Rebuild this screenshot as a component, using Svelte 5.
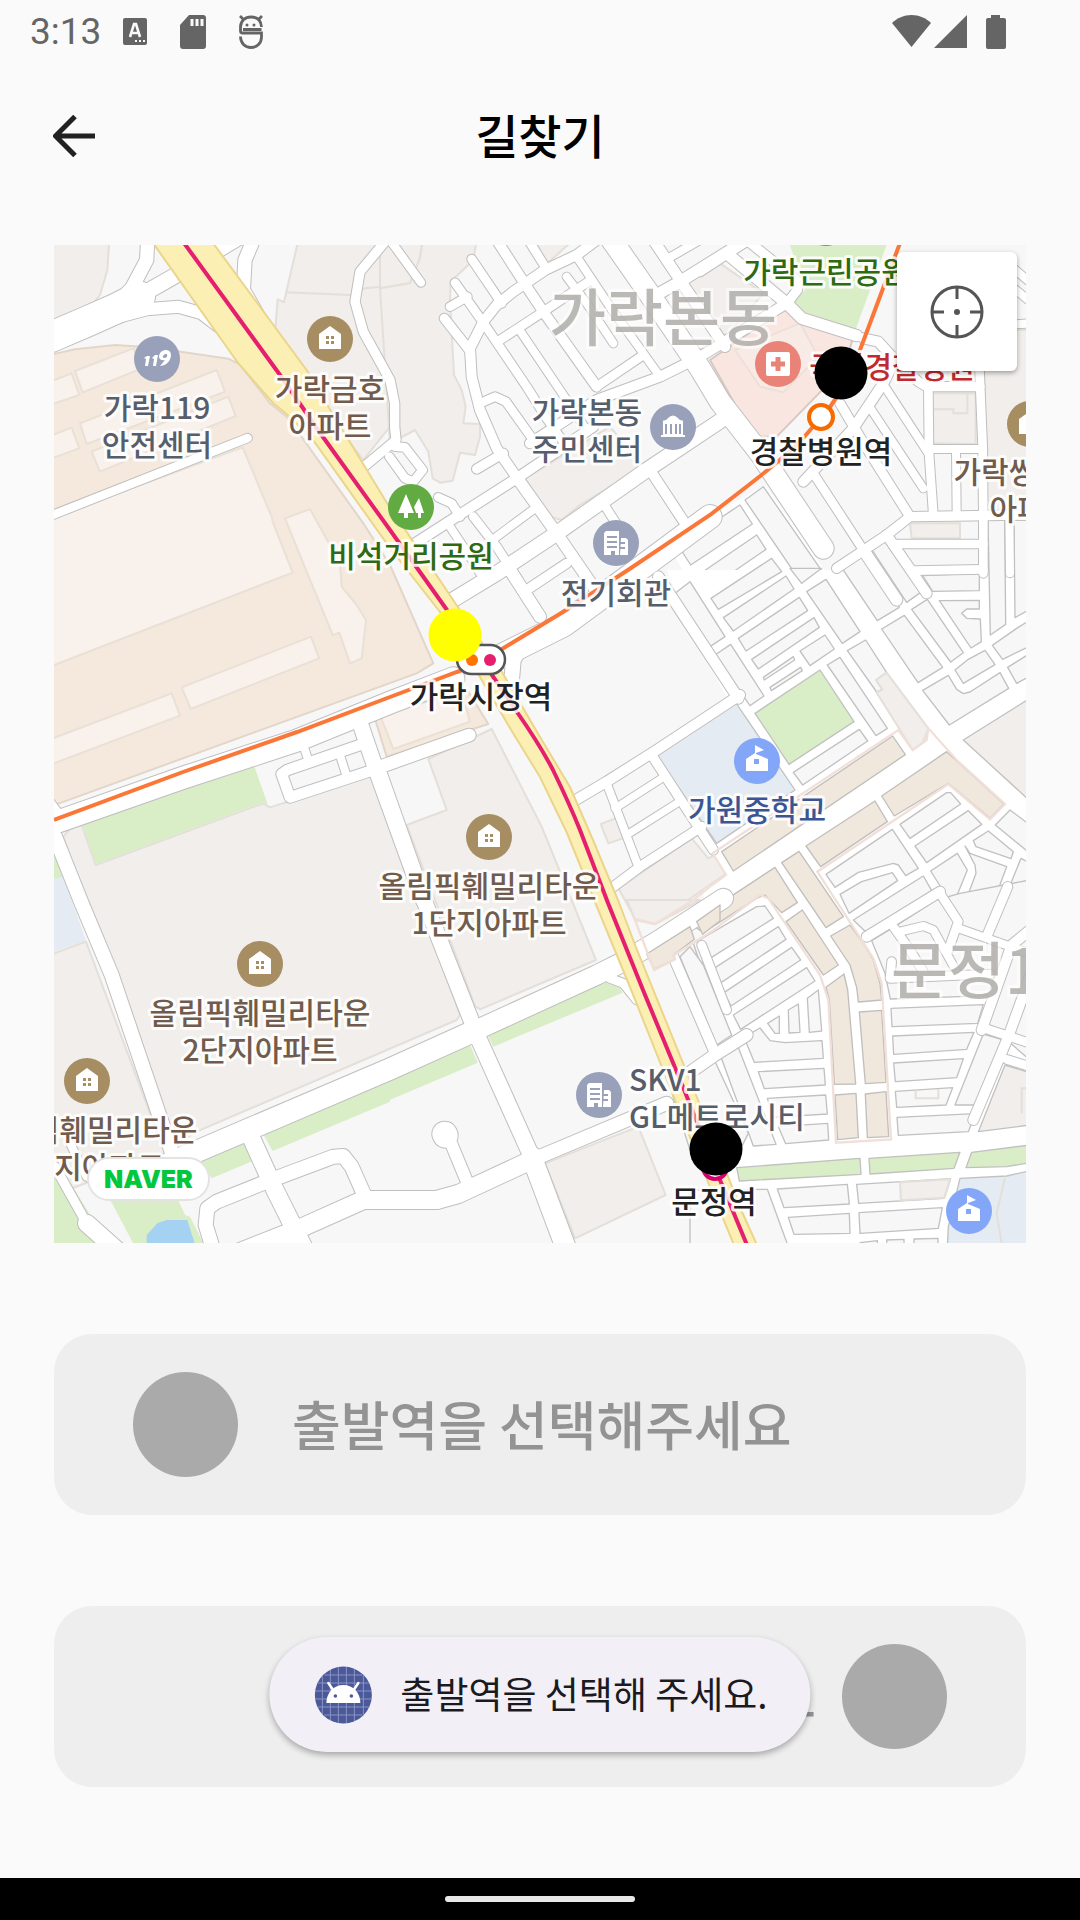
<script>
	// the map is cut in tiles, each drawn on a grid of three units per pixel
	const tiles = [
		{
			x: 50,
			y: 240,
			areas: [
				['lot', '0,0 178,0 172,90 150,165 118,205 0,248'],
				['lot', '745,0 1020,0 1020,560 940,660 800,480 675,280 683,178 702,186'],
				['market', '0,345 75,328 195,315 300,322 535,356 570,374 660,490 715,535 940,850 1020,975 1150,1270 1100,1300 0,1700'],
				['block', '0,425 65,400 88,465 0,495'],
				['block', '75,393 250,325 275,385 98,457'],
				['block', '90,550 500,390 525,455 110,612'],
				['block', '125,635 535,470 557,528 150,695'],
				['block', '0,588 65,563 88,625 0,657'],
				['block', '0,835 578,622 665,830 668,845 728,998 0,1280']
			],
			lines: ['706,157 900,165 945,145 1020,138'],
			roads: [
				[90, '0,292 110,245 200,205 270,170'],
				[46, '230,190 370,110 570,-10'],
				[40, '293,0 290,60 245,145 200,190'],
				[36, '150,245 290,208 385,200 455,220 520,270'],
				[40, '610,0 585,60 580,150 620,220'],
				[28, '1005,5 930,95 915,185 940,275 1020,420 1034,490 1034,560 1038,600 930,690'],
				[25, '0,828 593,594']
			]
		},
		{
			x: 380,
			y: 240,
			areas: [
				['lot', '0,0 128,0 118,60 90,130 0,145'],
				['lot', '0,145 90,130 118,60 130,0 290,0 280,60 212,125 210,180 222,405 245,450 257,500 250,550 300,552 300,590 285,645 240,638 218,722 180,728 158,715 145,635 105,570 30,610'],
				['lot', '435,715 690,560 790,680 600,795 545,840 510,830'],
				['lot', '465,0 580,0 500,72'],
				['lot', '915,130 1020,70 1150,160 1020,310']
			],
			roads: [
				[25, '30,0 123,128'],
				[26, '275,57 365,190'],
				[30, '350,0 440,140 490,215 650,440'],
				[26, '445,0 495,80'],
				[30, '650,0 590,45 495,90 400,155 350,195 310,245 270,325 275,410 300,510 350,625 410,712'],
				[26, '225,128 310,248 440,440 500,535 560,620'],
				[26, '210,200 262,170'],
				[28, '193,235 268,330'],
				[26, '360,300 490,215 630,122'],
				[24, '590,50 700,215 790,340 840,410'],
				[24, '415,265 560,480 620,570'],
				[24, '560,110 620,190 700,310'],
				[62, '695,0 800,150 960,385 1020,485 1140,640 1330,925'],
				[32, '820,0 920,150 1035,320'],
				[24, '870,52 960,0'],
				[34, '820,170 900,125 1100,0'],
				[26, '650,440 790,345'],
				[30, '450,610 650,480 840,410 960,350 1220,190'],
				[26, '305,488 345,470 378,485 460,600'],
				[28, '290,687 370,640'],
				[30, '90,920 230,830 410,715 640,560'],
				[34, '410,712 530,880 640,1040'],
				[44, '210,1085 350,1000 530,880 800,690 1040,530'],
				[30, '810,690 915,850'],
				[26, '670,790 740,900'],
				[26, '175,772 215,790 240,830'],
				[26, '280,830 350,920 415,1020'],
				[24, '210,860 270,950 300,1000'],
				[24, '330,905 465,805'],
				[26, '45,620 75,622 128,690 100,725 75,715 28,650']
			]
		},
		{
			x: 710,
			y: 240,
			areas: [
				['hospital', '0,360 225,205 270,240 428,298 400,385 200,590 130,590'],
				['ward', '75,330 270,250 325,350 220,457 150,440'],
				['park', '235,0 535,0 437,268 270,225 250,185 285,150'],
				['lot', '820,270 960,270 960,820 830,820'],
				['lot', '665,460 797,460 797,612 668,610'],
				['lot', '600,850 750,850 750,895 605,895'],
				['blank', '-130,905 165,735 350,1000 0,1150 -60,1030'],
				['cell', '-95,917 90,795 127,852 -58,975'],
				['cell', '-40,1008 140,885 168,928 -10,1050'],
				['cell', '105,780 160,740 335,992 275,1030']
			],
			lines: ['668,508 730,508 730,520 772,520 772,460'],
			roads: [
				[34, '50,40 230,190 275,235 440,287'],
				[28, '110,0 265,125 262,150 235,185'],
				[28, '-30,95 130,-10'],
				[30, '460,295 505,305 555,360 520,430 430,565 280,725'],
				[28, '555,360 625,425 650,440 810,440'],
				[28, '390,490 470,625 600,830'],
				[26, '310,700 460,930'],
				[24, '478,500 640,745'],
				[24, '518,430 655,640'],
				[26, '655,440 657,640 670,825'],
				[26, '808,380 818,620 820,840 820,1000'],
				[24, '660,627 820,627'],
				[24, '738,630 740,820'],
				[28, '380,985 530,885 600,830 740,828 960,825'],
				[26, '560,912 820,912'],
				[26, '610,992 820,988'],
				[24, '898,830 900,1000'],
				[34, '460,930 560,1080'],
				[30, '530,885 650,1060'],
				[24, '820,260 960,250'],
				[24, '880,60 1000,160'],
				[24, '880,120 980,200']
			]
		},
		{
			x: 50,
			y: 570,
			areas: [
				['block', '-10,512 365,370 390,437 -10,588'],
				['block', '395,352 783,200 807,265 422,417'],
				['block', '705,-155 780,-183 870,-20 875,50 920,105 948,150 935,265 900,280 868,188 848,195 770,5'],
				['park', '0,820 40,920 0,935'],
				['school', '0,930 40,920 108,1112 0,1150'],
				['lot', '0,1155 108,1115 345,1750 0,1880'],
				['lot', '40,800 60,775 95,765 137,885 640,700 660,712 970,612 1230,1335 1220,1350 440,1685 360,1735'],
				['park', '97,762 605,567 653,703 640,697 137,883']
			],
			roads: [
				[66, '0,763 400,623 740,512 1020,398 1210,325'],
				[30, '0,700 30,740'],
				[42, '15,800 95,1000 185,1215 365,1745'],
				[46, '920,430 975,590 1120,990'],
				[32, '985,595 720,682 695,612 712,600 930,525'],
				[24, '748,490 778,580'],
				[24, '868,550 892,625']
			]
		},
		{
			x: 380,
			y: 570,
			areas: [
				['market', '-20,430 265,365 325,462 20,560'],
				['block', '0,435 245,365 270,455 40,537'],
				['lot', '80,765 200,720 145,567 335,477 485,770 648,1170 300,1318 285,1308'],
				['lot', '662,762 720,740 745,800 685,820'],
				['lot', '715,955 935,805 985,865 1030,840 1040,910 820,1062 765,1045']
			],
			roads: [
				[38, '-20,598 268,495'],
				[46, '-10,590 130,985 285,1380'],
				[70, '330,275 550,165 700,55 990,-160'],
				[44, '395,330 400,270 430,215'],
				[36, '390,0 480,140'],
				[28, '440,60 560,-20'],
				[30, '570,700 680,635 830,540 1080,375'],
				[24, '680,640 775,890'],
				[22, '705,715 845,625'],
				[22, '740,795 890,700'],
				[28, '815,555 1000,840'],
				[28, '680,965 780,890 965,770'],
				[32, '835,20 1075,385']
			]
		},
		{
			x: 710,
			y: 570,
			areas: [
				['blank', '-130,0 960,0 960,2030 0,2030 -20,960 48,915 8,850 20,820 100,600 60,400 -60,180'],
				['cell', '-105,70 -60,35 45,200 0,230'],
				['cell', '3,85 185,-35 215,5 25,118'],
				['cell', '40,143 228,18 252,57 70,183'],
				['cell', '85,205 268,82 293,122 108,243'],
				['cell', '125,268 312,143 328,172 145,297'],
				['cell', '160,322 250,260 254,270 163,330'],
				['cell', '180,352 272,292 277,302 184,362'],
				['cell', '270,243 345,195 373,237 300,287'],
				['cell', '290,65 348,28 450,185 397,220'],
				['cell', '240,-5 335,-5 275,40'],
				['cell', '15,255 62,223 162,378 120,407'],
				['park edged', '135,430 330,300 432,455 237,583'],
				['cell', '250,607 448,478 473,513 278,645'],
				['cell', '352,285 390,262 532,475 498,497'],
				['cell', '412,242 467,210 530,308 498,330 517,358 500,366'],
				['lot', '530,308 655,475 640,515 608,540 500,368 517,358 498,330'],
				['school edged', '-165,550 70,387 255,660 20,820'],
				['cell', '395,-7 468,-52 568,112 502,152'],
				['cell', '483,-65 527,-95 635,65 590,97'],
				['cell', '515,177 583,136 698,292 624,338'],
				['cell', '605,118 652,88 760,248 722,276'],
				['cell', '638,17 808,10 808,62 668,64'],
				['cell', '688,92 808,91 808,117 770,117 755,130 770,145 811,147 814,215 783,234'],
				['cell', '735,300 775,268 825,241 855,284 760,340'],
				['cell', '638,361 715,316 740,358 760,371 780,366 870,308 896,355 718,465'],
				['cell', '834,-150 884,-150 887,163 841,195'],
				['cell', '912,-150 960,-150 960,118 915,143'],
				['cell', '847,226 920,175 960,150 960,228 878,268'],
				['cell', '893,292 960,250 960,318 920,340'],
				['lot edged', '760,510 960,385 960,693'],
				['shops', '35,845 548,498 586,554 70,903'],
				['shops', '515,678 710,545 882,702 840,745 715,640 553,738'],
				['shops', '288,828 495,693 532,755 332,890'],
				['shops', '215,878 267,844 400,1040 348,1073'],
				['shops', '-60,1060 195,892 262,998 215,1028 165,975 140,985 -20,1088'],
				['cell', '570,763 710,668 722,668 752,702 600,805'],
				['cell', '615,828 775,722 815,763 650,878'],
				['cell', '856,765 900,720 960,765 960,850'],
				['cell', '348,913 547,778 625,895 587,917 565,885 550,880 445,907 375,952'],
				['cell', '390,973 455,935 547,908 563,932 417,1030'],
				['cell', '430,1050 640,918 665,962 470,1088'],
				['cell', '790,812 835,783 910,845 903,866 798,830'],
				['cell', '662,903 742,850 772,900 728,1008'],
				['cell', '765,828 780,850 890,890 838,1030 748,1045 798,910 795,885'],
				['cell', '933,865 960,880 960,960 930,1040 870,1020']
			],
			fences: [
				'0,950 48,915 8,850 565,480 608,540 650,510 655,475 740,570 885,702 840,748 715,642 322,905 490,1165 515,1240 543,1708 378,1718 355,1290 330,1215 175,985 150,975 0,1088'
			],
			roads: []
		},
		{
			x: 710,
			y: 900,
			areas: [
				['shops', '228,65 277,30 385,195 340,225'],
				['shops', '362,108 420,75 460,130 490,180 510,250 515,300 445,306 440,262 420,195'],
				['shops', '348,262 402,222 413,270 437,552 373,553 358,300'],
				['shops', '448,336 515,331 528,547 466,551'],
				['shops', '375,585 438,580 445,713 383,719'],
				['shops', '466,582 528,575 536,710 472,713'],
				['cell', '-50,130 140,20 165,18 190,55 0,175 -30,190'],
				['cell', '12,205 205,80 228,118 33,248'],
				['cell', '42,278 245,142 272,180 63,318'],
				['cell', '70,345 290,203 315,243 92,388'],
				['cell', '-60,140 -20,195 65,405 20,435 -90,170'],
				['cell', '-120,560 12,478 115,700 95,740 -60,750'],
				['cell', '30,463 80,430 198,733 130,738'],
				['cell', '173,370 208,348 208,400 195,400'],
				['cell', '235,330 265,312 270,397 237,399'],
				['cell', '292,295 325,270 335,393 298,397'],
				['cell', '102,412 150,384 180,422 225,428 336,422 340,475 133,487'],
				['cell', '145,515 342,505 346,555 163,566'],
				['cell', '172,595 347,585 352,642 190,652'],
				['cell', '205,680 353,670 356,720 227,731'],
				['cell', '485,122 543,87 680,0 750,-20 960,-60 960,480 835,373 835,287 541,297 525,220'],
				['cell', '543,325 820,314 803,370 546,380'],
				['cell', '548,408 792,397 770,448 551,463'],
				['cell', '551,489 760,476 740,533 556,545'],
				['cell', '556,574 728,563 708,615 560,622'],
				['cell', '561,652 795,641 775,695 565,706'],
				['cell', '820,402 882,420 805,615 735,615'],
				['lot edged', '885,495 960,518 960,675 805,695'],
				['park edged', '80,803 450,775 453,823 88,843'],
				['park edged', '477,775 750,757 732,805 480,822'],
				['park edged', '785,757 960,735 960,788 890,800 768,803'],
				['school edged', '750,835 890,828 960,812 960,1040 712,1040 715,980'],
				['cell', '202,867 412,853 418,912 222,923'],
				['cell', '440,853 722,836 703,895 446,910'],
				['lot', '570,847 720,838 703,893 573,901'],
				['cell', '235,952 418,940 420,1000 252,1003'],
				['cell', '447,938 697,923 685,985 450,1000'],
				['cell', '450,1028 502,1022 502,1040 450,1040'],
				['cell', '530,1020 582,1018 582,1040 530,1040'],
				['cell', '612,1017 684,1015 684,1040 612,1040'],
				['cell', '-60,870 172,868 235,1040 -60,1040']
			],
			lines: ['617,572 617,595 685,595 685,567', '935,640 935,565 960,565', '885,835 860,940 875,1030'],
			roads: [
				[24, '745,85 830,115 960,160'],
				[28, '893,-40 830,110'],
				[30, '960,90 905,135 815,390'],
				[30, '960,230 895,410 790,660'],
				[26, '690,-20 745,65 715,150'],
				[26, '550,80 600,150 640,215'],
				[24, '570,95 640,78 670,90 740,215'],
				[30, '470,110 690,-25'],
				[26, '545,185 540,235 840,222'],
				[26, '825,385 960,430'],
				[26, '890,478 960,500']
			]
		},
		{
			x: 50,
			y: 900,
			areas: [
				['park', '0,830 50,830 130,960 200,1040 0,1040'],
				['park', '165,870 375,880 405,945 420,950 465,1040 255,1040'],
				['lake', '290,1005 322,970 350,960 412,960 437,1040 290,1040'],
				['park', '455,785 588,727 610,782 485,835'],
				['park', '640,703 1020,538 1020,605 668,753']
			],
			roads: [
				[64, '300,815 385,778 1020,507 1275,392'],
				[24, '60,730 110,830 190,870'],
				[28, '15,800 110,970'],
				[52, '110,970 200,1050'],
				[52, '600,705 675,870 765,1050'],
				[42, '490,1050 467,975 472,925 500,905 650,845 690,830 850,770 880,768 905,800 945,890'],
				[54, '560,1060 750,985 940,900 1160,900'],
				[30, '750,985 700,1040']
			]
		},
		{
			x: 380,
			y: 900,
			areas: [
				['lot', '740,0 960,0 825,72 765,60'],
				['lot', '495,790 775,680 857,885 585,1015'],
				['park', '0,550 268,430 293,488 0,612'],
				['park', '322,403 675,245 710,250 728,278 340,440']
			],
			roads: [
				[58, '285,392 650,225 720,190 830,125 1030,-5'],
				[26, '690,235 730,250 770,300'],
				[48, '285,392 455,770'],
				[60, '455,770 560,1050'],
				[54, '0,900 170,900 235,882 455,780'],
				[40, '455,780 860,610'],
				[36, '890,545 1000,468 1100,405'],
				[36, '205,710 265,855'],
				[74, '194,702 196,706'],
				[30, '880,170 1005,460'],
				[26, '965,135 1040,330']
			]
		},
		{
			x: 380,
			y: 900,
			areas: [],
			shops: ['800,162 930,80 943,118 880,165 885,178 822,207', '950,65 1020,15 1020,62 968,103'],
			fences: ['760,55 825,72 940,0 990,-40', '765,60 822,210 885,178 882,165 1020,78'],
			roads: []
		}
	];

	const places = [
		{ kind: 'fire', x: 157, y: 359 },
		{ kind: 'home', x: 330, y: 339 },
		{ kind: 'office', x: 673, y: 427 },
		{ kind: 'tower', x: 616, y: 543 },
		{ kind: 'trees', x: 411, y: 507 },
		{ kind: 'hospital', x: 778, y: 364 },
		{ kind: 'home', x: 1030, y: 424 },
		{ kind: 'school', x: 757, y: 761 },
		{ kind: 'home', x: 489, y: 837 },
		{ kind: 'home', x: 260, y: 964 },
		{ kind: 'home', x: 87, y: 1081 },
		{ kind: 'tower', x: 599, y: 1095 },
		{ kind: 'school', x: 969, y: 1211 },
		{ kind: 'trees', x: 826, y: 223 }
	];

	const labels = [
		{ kind: 'civic', x: 157, y: 419, lines: ['가락119', '안전센터'] },
		{ kind: 'estate', x: 330, y: 400, lines: ['가락금호', '아파트'] },
		{ kind: 'green', x: 411, y: 567, lines: ['비석거리공원'] },
		{ kind: 'civic', x: 587, y: 423, lines: ['가락본동', '주민센터'] },
		{ kind: 'civic', x: 616, y: 604, lines: ['전기회관'] },
		{ kind: 'green', x: 826, y: 283, lines: ['가락근린공원'] },
		{ kind: 'clinic', x: 892, y: 378, lines: ['국립경찰병원'] },
		{ kind: 'estate', x: 1031, y: 483, lines: ['가락쌍용1차', '아파트'] },
		{ kind: 'study', x: 757, y: 821, lines: ['가원중학교'] },
		{ kind: 'estate', x: 489, y: 897, lines: ['올림픽훼밀리타운', '1단지아파트'] },
		{ kind: 'estate', x: 260, y: 1024, lines: ['올림픽훼밀리타운', '2단지아파트'] },
		{ kind: 'estate', x: 87, y: 1141, lines: ['올림픽훼밀리타운', '3단지아파트'] },
		{ kind: 'civic start', x: 629, y: 1091, lines: ['SKV1', 'GL메트로시티'] },
		{ kind: 'station', x: 821, y: 463, lines: ['경찰병원역'] },
		{ kind: 'station', x: 481, y: 708, lines: ['가락시장역'] },
		{ kind: 'station', x: 714, y: 1213, lines: ['문정역'] }
	];

	const stops = [
		{ name: '경찰병원역', x: 841, y: 373 },
		{ name: '가락시장역', x: 455, y: 635 },
		{ name: '문정역', x: 716, y: 1149 }
	];

	let selected = $state('가락시장역');

	const place = (tile) => `translate(${tile.x} ${tile.y}) scale(${1 / 3})`;
</script>

<div class="screen">
	<header class="status">
		<span class="clock">3:13</span>
		<svg class="left-icon" viewBox="0 0 24 34" aria-hidden="true">
			<rect y="3" width="24" height="27" rx="2" fill="#656565" />
			<path d="M7 22 11 9h2l4 13M9 18h6" fill="none" stroke="#fafafa" stroke-width="2.6" />
			<path d="M12 26h2m2 0h2m2 0h2" stroke="#fafafa" stroke-width="2" />
		</svg>
		<svg class="left-icon sd" viewBox="0 0 26 34" aria-hidden="true">
			<path d="M9 0h14a3 3 0 0 1 3 3v28a3 3 0 0 1-3 3H3a3 3 0 0 1-3-3V10z" fill="#656565" />
			<path d="M12 4v7m5-7v7m5-7v7" stroke="#fafafa" stroke-width="3" />
		</svg>
		<svg class="left-icon" viewBox="0 0 24 34" aria-hidden="true">
			<g fill="none" stroke="#656565" stroke-width="2.800">
				<path d="M22.500 12C22 5 18 2 12 2S1.500 6 1.500 12v4q0 2 2 2h19v4c0 6-4.500 10.500-10.500 10.500S1.500 28 1.500 21.500" />
				<path d="M4 14.500h18.500M1 1l4 4M23 1l-4 4" />
			</g>
			<circle cx="8" cy="10" r="1.500" fill="#656565" />
			<circle cx="15" cy="10" r="1.500" fill="#656565" />
		</svg>
		<svg class="signals" viewBox="0 0 114 34" aria-hidden="true">
			<g fill="#656565">
				<path d="M19.500 0C12 0 5 3 0 8l19.500 24L39 8C34 3 27 0 19.500 0z" />
				<path d="M75 0v33H42z" />
				<path d="M99 0h9v3h4a2 2 0 0 1 2 2v27a2 2 0 0 1-2 2H96a2 2 0 0 1-2-2V5a2 2 0 0 1 2-2h3z" />
			</g>
		</svg>
	</header>

	<nav class="bar">
		<button class="back" type="button" aria-label="뒤로">
			<svg viewBox="0 0 42 42" aria-hidden="true">
				<path d="M22 1.500 2.500 21 22 40.500M3 21h39" fill="none" stroke="#212121" stroke-width="5" />
			</svg>
		</button>
		<h1>길찾기</h1>
	</nav>

	<main>
		<div class="map">
			<svg viewBox="54 245 972 998" role="img" aria-label="지도">
				<rect x="54" y="245" width="972" height="998" fill="#f7f7f7" />

				{#each tiles as tile}
					<g transform={place(tile)}>
						{#each tile.areas as [kind, points]}
							<polygon class="area {kind}" {points} />
						{/each}
						{#each tile.lines ?? [] as points}
							<polyline class="wall" {points} />
						{/each}
					</g>
				{/each}

				{#each tiles as tile}
					<g class="casing" transform={place(tile)}>
						{#each tile.roads as [width, points]}
							<polyline {points} stroke-width={width + 6} />
						{/each}
					</g>
				{/each}
				{#each tiles as tile}
					<g class="road" transform={place(tile)}>
						{#each tile.roads as [width, points]}
							<polyline {points} stroke-width={width} />
						{/each}
					</g>
				{/each}
				{#each tiles as tile}
					<g transform={place(tile)}>
						{#each tile.shops ?? [] as points}
							<polygon class="area shops" {points} />
						{/each}
						{#each tile.fences ?? [] as points}
							<polyline class="fence" {points} />
						{/each}
					</g>
				{/each}

				<path
					class="avenue"
					d="M153 243 238 363 273 403 290 417 313 440 390 548 440 612 480 677 513 733 540 777 567 833 597 907 630 987 687 1130 710 1187 734 1245H757L742 1212 698 1100 637 950 618 900 593 840 570 787 540 737 502 672 480 640 433 570 390 508 320 393 308 372 213 243z"
				/>
				<path
					class="line8"
					d="M54 820 183 772 297 732 390 697 457 672Q480 664 502 649L563 612 628 570 710 515 750 484Q790 453 805 436L830 407Q848 382 860 350L900 243"
				/>
				<path
					class="line3"
					d="M184 243 280 375 323 437 390 530 447 610 492 675 517 712Q540 745 553 770 570 805 580 830L608 903 643 990 683 1087 720 1180 747 1245"
				/>

				<g class="district">
					<text x="549" y="341">가락본동</text>
					<text x="891" y="994">문정1동</text>
				</g>

				{#each places as { kind, x, y }}
					<g class="poi {kind}" transform="translate({x} {y})">
						<circle r="23" />
						{#if kind === 'home'}
							<path d="M0-13 11-5V10H-11V-5z" fill="#fff" />
							<path d="M-4-3h3v3h-3zM1-3h3v3H1zM-4 2h3v3h-3zM1 2h3v3H1z" fill="#a68e62" />
						{:else if kind === 'fire'}
							<path
								d="M-13-1-10-3H-7L-9 7H-12L-11 0zM-5-1-2-4H1L-1 7H-4L-3 0zM3 7 8 1C-1 3 1-9 9-9 18-9 14 7 3 7zM8-5Q4-2 7-1 11-1 10-5z"
								fill="#fff"
							/>
						{:else if kind === 'office'}
							<path d="M-11-6C-8-7-6-7-5-9Q0-14 5-9C6-7 8-7 11-6zM-10-6H10V8H-10zM-12 8H12V10H-12z" fill="#fff" />
							<path d="M-7-3V7M-2-3V7M3-3V7M7-3V7" stroke="#98a0ba" stroke-width="2" />
						{:else if kind === 'tower'}
							<path d="M-10-12H3V12H-1V8H-5V12H-12V-10zM5-5H10L12-3V12H4z" fill="#fff" />
							<path d="M-9-6H1M-9-1H1M-9 4H1M4 0H9M4 5H9" stroke="#98a0ba" stroke-width="2" />
						{:else if kind === 'trees'}
							<path d="M-5-13-13 6H-7V11H-3V6H3zM8-9 3 0 5 6H7V11H10V6H13z" fill="#fff" />
						{:else if kind === 'hospital'}
							<rect x="-12" y="-12" width="24" height="24" rx="2" fill="#fff" />
							<path d="M0-7V7M-7 0H7" stroke="#e98378" stroke-width="5" />
						{:else}
							<path d="M-2-16 7-11-1-8V-7L11-2V10H-11V-2L-2-8z" fill="#fff" />
							<rect x="-3" y="-2" width="5" height="5" fill="#83a6f9" />
						{/if}
					</g>
				{/each}

				{#each labels as { kind, x, y, lines }}
					<text class="label {kind}" {y}>
						{#each lines as line, i}
							<tspan {x} y={y + i * 37}>{line}</tspan>
						{/each}
					</text>
				{/each}

				<rect x="457" y="645" width="48" height="29" rx="14.500" fill="#fff" stroke="#555" stroke-width="2.500" />
				<circle cx="472" cy="660" r="6" fill="#ff7300" />
				<circle cx="490" cy="660" r="6" fill="#e61e6e" />
				<circle cx="821" cy="417" r="12" fill="#fff" stroke="#f66a00" stroke-width="4" />
				<circle cx="715" cy="1167" r="12" fill="#fff" stroke="#d4006e" stroke-width="4" />

				{#each stops as { name, x, y }}
					<circle class="stop" class:selected={name === selected} cx={x} cy={y} r="26.500" />
				{/each}
			</svg>

			<button class="locate" type="button" aria-label="현재 위치">
				<svg viewBox="0 0 54 54" aria-hidden="true">
					<circle cx="27" cy="27" r="25" fill="none" stroke="#555" stroke-width="3" />
					<path d="M27 2v12M27 40v12M2 27h12M40 27h12" stroke="#555" stroke-width="3" />
					<circle cx="27" cy="27" r="3" fill="#555" />
				</svg>
			</button>
			<a class="naver" href="#naver">NAVER</a>
		</div>

		<button class="card" type="button">
			<span class="dot"></span>
			<span class="prompt">출발역을 선택해주세요</span>
		</button>
		<button class="card end" type="button">
			<span class="prompt">도착역을 선택해주세요</span>
			<span class="dot"></span>
		</button>
	</main>

	<div class="toast" role="status">
		<svg viewBox="0 0 58 58" aria-hidden="true">
			<circle cx="29" cy="29" r="28.500" fill="#4b5999" />
			<path
				d="M8 10v38M16 4v50M24 1v56M32 1v56M40 3v52M49 9v40M10 9h38M3 17h52M1 25h56M1 33h56M3 41h52M10 49h38"
				stroke="#8a94c4"
				stroke-width="1"
			/>
			<path d="M12 37C12 27 19 19 29 19S46 27 46 37z" fill="#fff" />
			<path d="m18 23-4-6M40 23l4-6" stroke="#fff" stroke-width="2.500" stroke-linecap="round" />
			<circle cx="21" cy="30" r="1.800" fill="#4b5999" />
			<circle cx="37" cy="30" r="1.800" fill="#4b5999" />
		</svg>
		<span class="prompt">출발역을 선택해 주세요.</span>
	</div>

	<footer><span></span></footer>
</div>

<style>
	:global(body) {
		background: #fafafa;
	}

	.screen {
		position: relative;
		display: flex;
		flex-direction: column;
		min-height: 100vh;
		background: #fafafa;
		font-family: 'Noto Sans CJK KR', 'Noto Sans', sans-serif;
	}

	button {
		border: none;
		font: inherit;
		cursor: pointer;
	}

	.status {
		display: flex;
		align-items: center;
		height: 64px;
		padding: 0 74px 0 30px;
	}

	.clock {
		margin-right: 22px;
		font: 37px/64px Roboto, sans-serif;
		color: #656565;
	}

	.left-icon {
		width: 24px;
		height: 34px;
		margin-right: 33px;
	}

	.sd {
		width: 26px;
	}

	.signals {
		width: 114px;
		height: 34px;
		margin-left: auto;
	}

	.bar {
		display: grid;
		grid-template-columns: 95px 1fr 95px;
		align-items: center;
		height: 144px;
	}

	.back {
		display: flex;
		justify-content: flex-end;
		padding: 0;
		background: none;
	}

	.back svg {
		width: 42px;
		height: 42px;
	}

	h1 {
		margin: 0;
		padding-bottom: 4px;
		font-size: 47px;
		font-weight: 500;
		line-height: 64px;
		text-align: center;
		color: #000;
	}

	main {
		display: flex;
		flex: 1;
		flex-direction: column;
		gap: 91px;
		padding: 37px 54px 91px;
	}

	.map {
		position: relative;
	}

	.map > svg {
		display: block;
		width: 100%;
	}

	.area {
		stroke-width: 6;
		stroke-linejoin: round;
	}

	.lot {
		fill: #f1eeeb;
		stroke: #e4dfd8;
	}

	.market {
		fill: #f5e9dd;
		stroke: #e2d6ca;
	}

	.block {
		fill: #f9f2ec;
		stroke: #e9e0d6;
	}

	.park {
		fill: #d9edc7;
	}

	.school {
		fill: #e4ebf2;
	}

	.lake {
		fill: #a5d1f3;
	}

	.hospital.area {
		fill: #fae6e0;
		stroke: #d8c8c4;
	}

	.ward {
		fill: #f8ebe6;
		stroke: #eedfd9;
	}

	.blank {
		fill: #fff;
	}

	.cell {
		fill: #f7f7f7;
		stroke: #c1c1c1;
		stroke-width: 4;
	}

	.shops {
		fill: #f0e7dd;
		stroke: #c1bfbd;
		stroke-width: 4;
	}

	.edged {
		stroke: #c1c1c1;
		stroke-width: 4;
	}

	.wall {
		fill: none;
		stroke: #e4dfd8;
		stroke-width: 6;
	}

	.fence {
		fill: none;
		stroke: #f1e0d9;
		stroke-width: 7;
	}

	.casing,
	.road {
		fill: none;
		stroke: #bfbfbf;
		stroke-linecap: round;
		stroke-linejoin: round;
	}

	.road {
		stroke: #fff;
	}

	.avenue {
		fill: #fcefb4;
		stroke: #ead58b;
		stroke-width: 2;
	}

	.line8,
	.line3 {
		fill: none;
		stroke: #fa7737;
		stroke-width: 4;
	}

	.line3 {
		stroke: #e61e6e;
	}

	.district text {
		font-size: 62px;
		font-weight: 500;
		fill: #aaa8a3;
		fill-opacity: 0.8;
		stroke: #fff;
		stroke-opacity: 0.6;
		stroke-width: 6;
		paint-order: stroke;
	}

	.poi {
		fill: #98a0ba;
	}

	.home {
		fill: #a68e62;
	}

	.trees {
		fill: #62aa42;
	}

	.poi.hospital {
		fill: #e98378;
	}

	.poi.school {
		fill: #83a6f9;
	}

	.label {
		font-size: 30px;
		font-weight: 500;
		text-anchor: middle;
		stroke: #fff;
		stroke-opacity: 0.85;
		stroke-width: 6;
		stroke-linejoin: round;
		paint-order: stroke;
	}

	.civic {
		fill: #565d6b;
	}

	.start {
		text-anchor: start;
	}

	.estate {
		fill: #705b4d;
	}

	.green {
		fill: #2d6a12;
	}

	.clinic {
		fill: #c0292f;
	}

	.study {
		fill: #3b5594;
	}

	.station {
		font-size: 31px;
		fill: #222;
	}

	.stop {
		fill: #000;
	}

	.selected {
		fill: #ff0;
	}

	.locate {
		position: absolute;
		top: 7px;
		right: 9px;
		display: flex;
		align-items: center;
		justify-content: center;
		width: 120px;
		height: 119px;
		padding: 0;
		border-radius: 6px;
		background: #fff;
		box-shadow: 0 2px 5px rgba(0, 0, 0, 0.35);
	}

	.locate svg {
		width: 54px;
		height: 54px;
	}

	.naver {
		position: absolute;
		bottom: 42px;
		left: 33px;
		padding: 0 15px;
		border: 2px solid #e3e3e3;
		border-radius: 22px;
		background: #fff;
		font: 900 25px/40px Inter, sans-serif;
		color: #03c73c;
		text-decoration: none;
	}

	.card {
		display: flex;
		align-items: center;
		gap: 54px;
		padding: 38px 79px;
		border-radius: 38px;
		background: #eee;
		font-size: 53px;
		font-weight: 500;
		line-height: 80px;
		color: #939393;
	}

	.end {
		justify-content: flex-end;
		gap: 26px;
	}

	.dot {
		width: 105px;
		height: 105px;
		border-radius: 50%;
		background: #aaa;
	}

	.prompt {
		padding-bottom: 4px;
	}

	.toast {
		position: absolute;
		bottom: 168px;
		left: 50%;
		display: flex;
		align-items: center;
		gap: 28px;
		height: 115px;
		padding: 0 43px 0 45px;
		border-radius: 58px;
		background: #f2f0f6;
		box-shadow: 0 3px 6px rgba(0, 0, 0, 0.3);
		font-size: 37px;
		line-height: 56px;
		white-space: nowrap;
		color: #1b1b1f;
		transform: translateX(-50%);
	}

	.toast svg {
		width: 58px;
		height: 58px;
	}

	footer {
		display: flex;
		align-items: center;
		justify-content: center;
		height: 42px;
		background: #000;
	}

	footer span {
		width: 190px;
		height: 6px;
		border-radius: 3px;
		background: #e8e8e8;
	}
</style>
